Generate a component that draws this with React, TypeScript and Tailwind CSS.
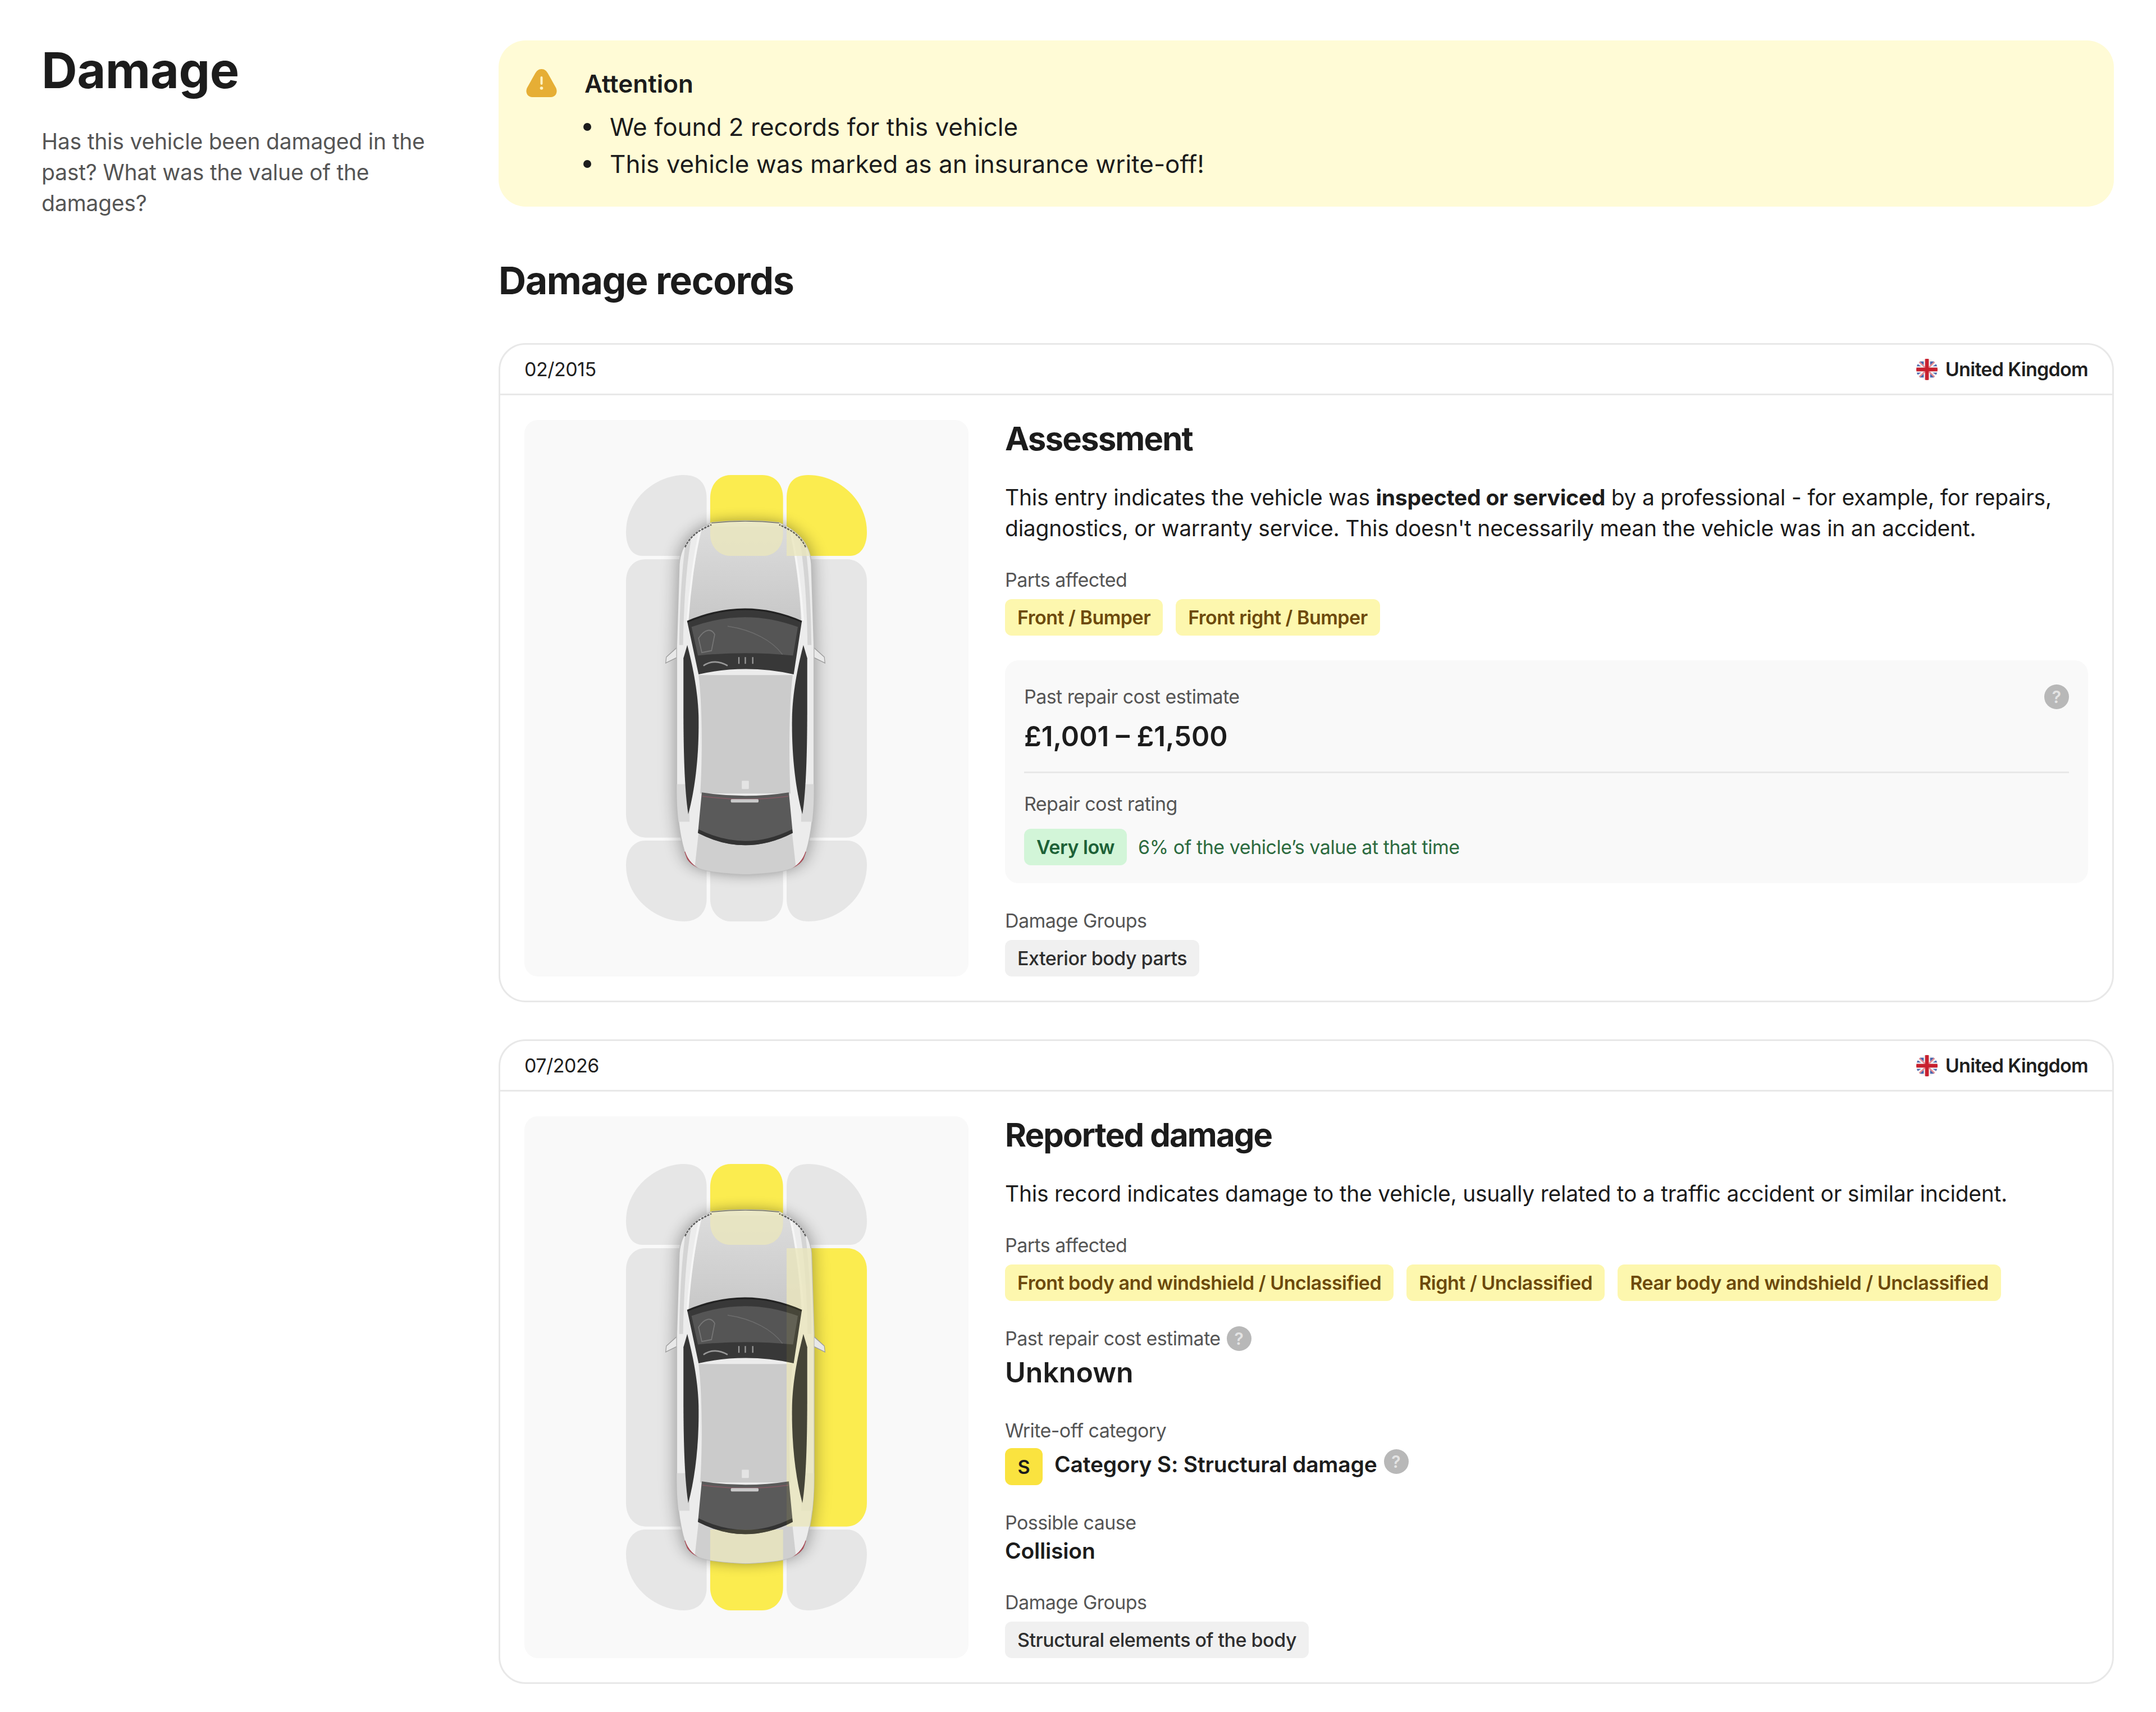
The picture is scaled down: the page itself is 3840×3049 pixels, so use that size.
import type { ReactNode } from "react";

const CAR_BODY =
  "M640 315 Q745 305 850 315 C900 335 945 365 950 425 L958 640 L958 1020 C958 1100 945 1170 925 1210 C905 1235 870 1245 745 1250 C620 1245 585 1235 565 1210 C545 1170 532 1100 532 1020 L532 640 L540 425 C545 365 590 335 640 315 Z";

// zones around the car, in the diagram's own units
const zones = {
  frontLeft: "M375 340 C375 250 470 188 555 188 C600 188 625 210 625 250 L625 403 L425 403 C395 403 375 380 375 340 Z",
  front: "M636 250 C636 210 665 188 700 188 L797 188 C835 188 862 210 862 250 L862 345 C862 380 835 403 800 403 L698 403 C665 403 636 380 636 345 Z",
  frontRight: "M873 250 C873 210 895 188 940 188 C1030 188 1122 250 1122 340 C1122 380 1100 403 1070 403 L873 403 Z",
  left: "M375 470 C375 435 400 412 435 412 L625 412 L625 1152 L435 1152 C400 1152 375 1125 375 1090 Z",
  right: "M873 412 L1060 412 C1095 412 1122 435 1122 470 L1122 1090 C1122 1125 1095 1152 1060 1152 L873 1152 Z",
  rearLeft: "M375 1225 C375 1185 400 1160 435 1160 L625 1160 L625 1315 C625 1350 600 1375 555 1375 C470 1375 375 1315 375 1225 Z",
  rear: "M636 1160 L862 1160 L862 1315 C862 1350 835 1375 797 1375 L700 1375 C665 1375 636 1350 636 1315 Z",
  rearRight: "M873 1160 L1060 1160 C1095 1160 1122 1185 1122 1225 C1122 1315 1030 1375 940 1375 C895 1375 873 1350 873 1315 Z",
};
type Zone = keyof typeof zones;

function CarDiagram({ id, hit }: { id: string; hit: Zone[] }) {
  const tint = (color: string) =>
    hit.map((z) => <path key={z} d={zones[z]} fill={color} />);
  return (
    <svg viewBox="375 188 747 1187" preserveAspectRatio="none" className="h-[795px] w-[429px]">
      <defs>
        <clipPath id={`${id}-body`}>
          <path d={CAR_BODY} />
        </clipPath>
        <filter id={`${id}-blur`} x="-30%" y="-30%" width="160%" height="160%">
          <feGaussianBlur stdDeviation="28 18" />
        </filter>
        <linearGradient id={`${id}-hood`} x1="0" y1="0" x2="0" y2="1">
          <stop offset="0" stopColor="#dcdcdc" />
          <stop offset="1" stopColor="#c8c8c8" />
        </linearGradient>
      </defs>
      {(Object.keys(zones) as Zone[]).map((z) => (
        <path key={z} d={zones[z]} fill={hit.includes(z) ? "#fbec4f" : "#e6e6e6"} />
      ))}
      <path d={CAR_BODY} fill="#000" opacity="0.38" filter={`url(#${id}-blur)`} />

      {/* mirrors */}
      <path d="M552 632 L500 672 L498 688 L552 665 Z" fill="#e8e8e8" stroke="#9a9a9a" strokeWidth="2" />
      <path d="M938 632 L990 672 L992 688 L938 665 Z" fill="#e8e8e8" stroke="#9a9a9a" strokeWidth="2" />

      {/* body */}
      <path d={CAR_BODY} fill="#ececec" stroke="#bdbdbd" strokeWidth="3" />
      <g clipPath={`url(#${id}-body)`}>
        <path d="M612 325 L880 325 C900 400 915 500 918 575 L568 575 C572 500 590 400 612 325 Z" fill={`url(#${id}-hood)`} />
        <path d="M568 325 C552 400 542 500 540 640 L552 640 C555 500 565 400 585 325 Z" fill="#d4d4d4" />
        <path d="M922 325 C938 400 948 500 950 640 L938 640 C935 500 925 400 905 325 Z" fill="#d4d4d4" />
        <path d="M606 330 C586 400 572 500 566 575 M884 330 C904 400 918 500 924 575" fill="none" stroke="#f6f6f6" strokeWidth="6" />
        <path d="M600 720 L892 720 C880 800 880 950 885 1035 L605 1035 C612 950 612 800 600 720 Z" fill="#cbcbcb" />
        <path d="M600 1140 L745 1172 L890 1140 L905 1255 L585 1255 Z" fill="#cfcfcf" />
        <rect x="532" y="1010" width="40" height="100" fill="#d8d8d8" />
        <rect x="918" y="1010" width="40" height="100" fill="#d8d8d8" />
        <g opacity="0.75">{tint("#e9e6c8")}</g>
        <path d="M558 380 C572 352 600 335 640 320" fill="none" stroke="#5c5c5c" strokeWidth="4" strokeDasharray="7 3" />
        <path d="M932 380 C918 352 890 335 850 320" fill="none" stroke="#5c5c5c" strokeWidth="4" strokeDasharray="7 3" />
        <path d="M640 314 Q745 304 850 314" fill="none" stroke="#444" strokeWidth="5" />
        <path d="M556 1190 C565 1215 585 1232 615 1243" fill="none" stroke="#a84a55" strokeWidth="5" />
        <path d="M934 1190 C925 1215 905 1232 875 1243" fill="none" stroke="#a84a55" strokeWidth="5" />
      </g>

      {/* glass */}
      <path d="M565 578 Q745 512 920 578 L895 718 Q745 690 600 718 Z" fill="#383838" />
      <path d="M578 592 Q745 540 908 592 L893 668 Q745 655 598 668 Z" fill="#555" />
      <path d="M565 578 Q745 512 920 578" fill="none" stroke="#222" strokeWidth="5" />
      <path d="M600 622 C620 596 640 596 650 612 L640 655 L610 660 Z" fill="none" stroke="#777" strokeWidth="3" />
      <path d="M690 590 C770 600 830 630 860 665" fill="none" stroke="#6e6e6e" strokeWidth="2" />
      <path d="M615 695 Q650 675 690 695 M725 690 L725 672 M745 690 L745 672 M768 690 L768 672" fill="none" stroke="#999" strokeWidth="4" />
      <path d="M553 675 L565 640 C580 690 598 760 600 830 C602 930 590 1020 568 1090 C555 1020 553 900 553 800 Z" fill="#363636" />
      <path d="M937 675 L925 640 C910 690 892 760 890 830 C888 930 900 1020 922 1090 C935 1020 937 900 937 800 Z" fill="#363636" />
      <path d="M610 1032 Q745 1050 880 1032 L892 1140 Q745 1205 598 1140 Z" fill="#5a5a5a" />
      <path d="M598 1140 Q745 1205 892 1140 L890 1130 Q745 1192 600 1130 Z" fill="#333" />
      <path d="M612 1042 Q745 1058 878 1042" fill="none" stroke="#7d5a62" strokeWidth="3" />
      <rect x="700" y="1050" width="86" height="9" rx="3" fill="#c9c9c9" />
      <rect x="734" y="1001" width="22" height="22" rx="2" fill="#e4e4e4" />

      {/* the yellow shows faintly through the whole car */}
      <g clipPath={`url(#${id}-body)`} opacity="0.08">{tint("#fbec4f")}</g>
    </svg>
  );
}

function Flag() {
  return (
    <svg viewBox="0 0 40 40" className="h-[38px] w-[38px] shrink-0">
      <defs>
        <clipPath id="uk-round">
          <circle cx="20" cy="20" r="20" />
        </clipPath>
      </defs>
      <g clipPath="url(#uk-round)">
        <rect width="40" height="40" fill="#f3f3f3" />
        <path d="M6 5 L14 5 L14 12 Z M26 5 L34 5 L26 12 Z M6 35 L14 35 L14 28 Z M26 35 L34 35 L26 28 Z M1 14 L9 14 L1 9 Z M39 14 L31 14 L39 9 Z M1 26 L9 26 L1 31 Z M39 26 L31 26 L39 31 Z" fill="#4a66ad" />
        <path d="M4 4 L16 16 M36 4 L24 16 M4 36 L16 24 M36 36 L24 24" stroke="#e58a92" strokeWidth="2.5" />
        <rect x="16.5" width="7" height="40" fill="#c8202f" />
        <rect y="16.5" width="40" height="7" fill="#c8202f" />
      </g>
    </svg>
  );
}

function Help() {
  return (
    <span className="flex h-[44px] w-[44px] shrink-0 items-center justify-center rounded-full bg-[#b8b8b8] text-[30px] font-semibold leading-none text-[#e4e4e4]">
      ?
    </span>
  );
}

function Label({ children, className = "" }: { children: ReactNode; className?: string }) {
  return <p className={`text-[34px] leading-[49px] tracking-[-0.55px] text-[#555555] ${className}`}>{children}</p>;
}

function Chip({ children, tone = "yellow" }: { children: ReactNode; tone?: "yellow" | "green" | "gray" }) {
  const tones = {
    yellow: "bg-[#fdf7ae] text-[#6d4a0c] font-semibold",
    green: "bg-[#d2f5d8] text-[#1d6137] font-semibold",
    gray: "bg-[#f0f0f0] text-[#2e2e2e] font-medium",
  };
  return (
    <span className={`inline-flex h-[65px] items-center rounded-[12px] px-[22px] text-[34px] tracking-[-0.5px] ${tones[tone]}`}>
      {children}
    </span>
  );
}

function RecordCard({ date, children, car }: { date: string; children: ReactNode; car: ReactNode }) {
  return (
    <section className="w-[2877px] overflow-hidden rounded-[48px] border-[3px] border-[#e8e8e8]">
      <div className="flex h-[90px] items-center justify-between border-b-[3px] border-[#e8e8e8] px-[43px] text-[34px] tracking-[-0.5px] text-[#1f1f1f]">
        <span>{date}</span>
        <span className="flex items-center gap-[14px] font-semibold tracking-[-0.7px]">
          <Flag />
          United Kingdom
        </span>
      </div>
      <div className="flex gap-[65px] px-[43px] pb-[43px] pt-[44px]">
        <div className="flex w-[791px] shrink-0 items-center justify-center rounded-[24px] bg-[#f9f9f9]">{car}</div>
        <div className="min-w-0 flex-1">{children}</div>
      </div>
    </section>
  );
}

export default function App() {
  return (
    <div className="flex h-[3049px] w-[3840px] bg-white font-['Inter','Liberation_Sans',sans-serif] text-[#1c1c1c]">
      <aside className="w-[888px] shrink-0 pl-[74px] pt-[72px]">
        <h1 className="text-[88px] font-bold leading-[106px] tracking-[-0.4px]">Damage</h1>
        <p className="mt-[46px] w-[720px] text-[39px] leading-[55px] tracking-[-0.2px] text-[#555555]">
          Has this vehicle been damaged in the past? What was the value of the damages?
        </p>
      </aside>

      <main className="w-[2877px] pt-[72px]">
        <div className="flex h-[296px] gap-[49px] rounded-[48px] bg-[#fffbd6] pl-[49px] pt-[52px]">
          <svg viewBox="0 0 55 50" className="-mt-[1px] h-[50px] w-[55px] shrink-0">
            <path d="M27.5 0 C33 0 36 3 39 8 L53 33 C57 41 53 50 44 50 L11 50 C2 50 -2 41 2 33 L16 8 C19 3 22 0 27.5 0 Z" fill="#e6ae35" />
            <rect x="25.5" y="13" width="4" height="15" rx="2" fill="#fff3c4" />
            <circle cx="27.5" cy="34" r="2.8" fill="#fff3c4" />
          </svg>
          <div>
            <p className="text-[44px] font-semibold leading-[50px]">Attention</p>
            <ul className="mt-[19px] text-[44px] leading-[66px]">
              <li className="flex items-center gap-[33px]">
                <span className="-ml-[2px] h-[14px] w-[14px] rounded-full bg-[#1c1c1c]" />
                We found 2 records for this vehicle
              </li>
              <li className="flex items-center gap-[33px]">
                <span className="-ml-[2px] h-[14px] w-[14px] rounded-full bg-[#1c1c1c]" />
                This vehicle was marked as an insurance write-off!
              </li>
            </ul>
          </div>
        </div>

        <h2 className="mt-[90px] text-[68px] font-bold leading-[82px] tracking-[-1.4px]">Damage records</h2>

        <div className="mt-[71px] flex flex-col gap-[66px]">
          <RecordCard date="02/2015" car={<CarDiagram id="first" hit={["front", "frontRight"]} />}>
            <h3 className="-mt-[1px] mb-[1px] text-[58px] font-bold leading-[68px] tracking-[-1.8px]">Assessment</h3>
            <p className="mt-[43px] text-[39px] leading-[55px] tracking-[-0.25px]">
              This entry indicates the vehicle was <b className="font-bold">inspected or serviced</b> by a professional - for example, for repairs, diagnostics, or warranty service. This doesn't necessarily mean the vehicle was in an accident.
            </p>
            <Label className="mt-[40px]">Parts affected</Label>
            <div className="mt-[10px] flex gap-[23px]">
              <Chip>Front / Bumper</Chip>
              <Chip>Front right / Bumper</Chip>
            </div>
            <div className="mt-[44px] rounded-[24px] bg-[#f9f9f9] px-[34px] pb-[32px] pt-[40px]">
              <div className="flex items-center justify-between">
                <Label>Past repair cost estimate</Label>
                <Help />
              </div>
              <p className="mt-[13px] text-[49px] font-semibold leading-[68px]">£1,001 – £1,500</p>
              <div className="mt-[28px] h-[3px] bg-[#e8e8e8]" />
              <Label className="mt-[30px]">Repair cost rating</Label>
              <div className="mt-[20px] flex items-center gap-[20px]">
                <Chip tone="green">Very low</Chip>
                <span className="text-[34px] tracking-[-0.45px] text-[#2c6b40]">6% of the vehicle’s value at that time</span>
              </div>
            </div>
            <Label className="mt-[42px]">Damage Groups</Label>
            <div className="mt-[10px] flex">
              <Chip tone="gray">Exterior body parts</Chip>
            </div>
          </RecordCard>

          <RecordCard date="07/2026" car={<CarDiagram id="second" hit={["front", "right", "rear"]} />}>
            <h3 className="-mt-[1px] mb-[1px] text-[58px] font-bold leading-[68px] tracking-[-1.8px]">Reported damage</h3>
            <p className="mt-[43px] text-[39px] leading-[55px] tracking-[-0.25px]">
              This record indicates damage to the vehicle, usually related to a traffic accident or similar incident.
            </p>
            <Label className="mt-[40px]">Parts affected</Label>
            <div className="mt-[10px] flex gap-[23px]">
              <Chip>Front body and windshield / Unclassified</Chip>
              <Chip>Right / Unclassified</Chip>
              <Chip>Rear body and windshield / Unclassified</Chip>
            </div>
            <div className="mt-[42px] flex items-center gap-[11px]">
              <Label>Past repair cost estimate</Label>
              <Help />
            </div>
            <p className="mt-[2px] text-[50px] font-semibold leading-[68px]">Unknown</p>
            <Label className="mt-[45px]">Write-off category</Label>
            <div className="mt-[7px] flex items-start gap-[21px]">
              <span className="flex h-[66px] w-[67px] items-center justify-center rounded-[12px] bg-[#fae33f] text-[34px] font-semibold">S</span>
              <span className="text-[39px] font-semibold leading-[58px] tracking-[-0.2px]">Category S: Structural damage</span>
              <span className="-ml-[9px] mt-[2px]"><Help /></span>
            </div>
            <Label className="mt-[42px]">Possible cause</Label>
            <p className="text-[39px] font-semibold leading-[52px] tracking-[-0.2px]">Collision</p>
            <Label className="mt-[41px]">Damage Groups</Label>
            <div className="mt-[10px] flex">
              <Chip tone="gray">Structural elements of the body</Chip>
            </div>
          </RecordCard>
        </div>
      </main>
    </div>
  );
}
